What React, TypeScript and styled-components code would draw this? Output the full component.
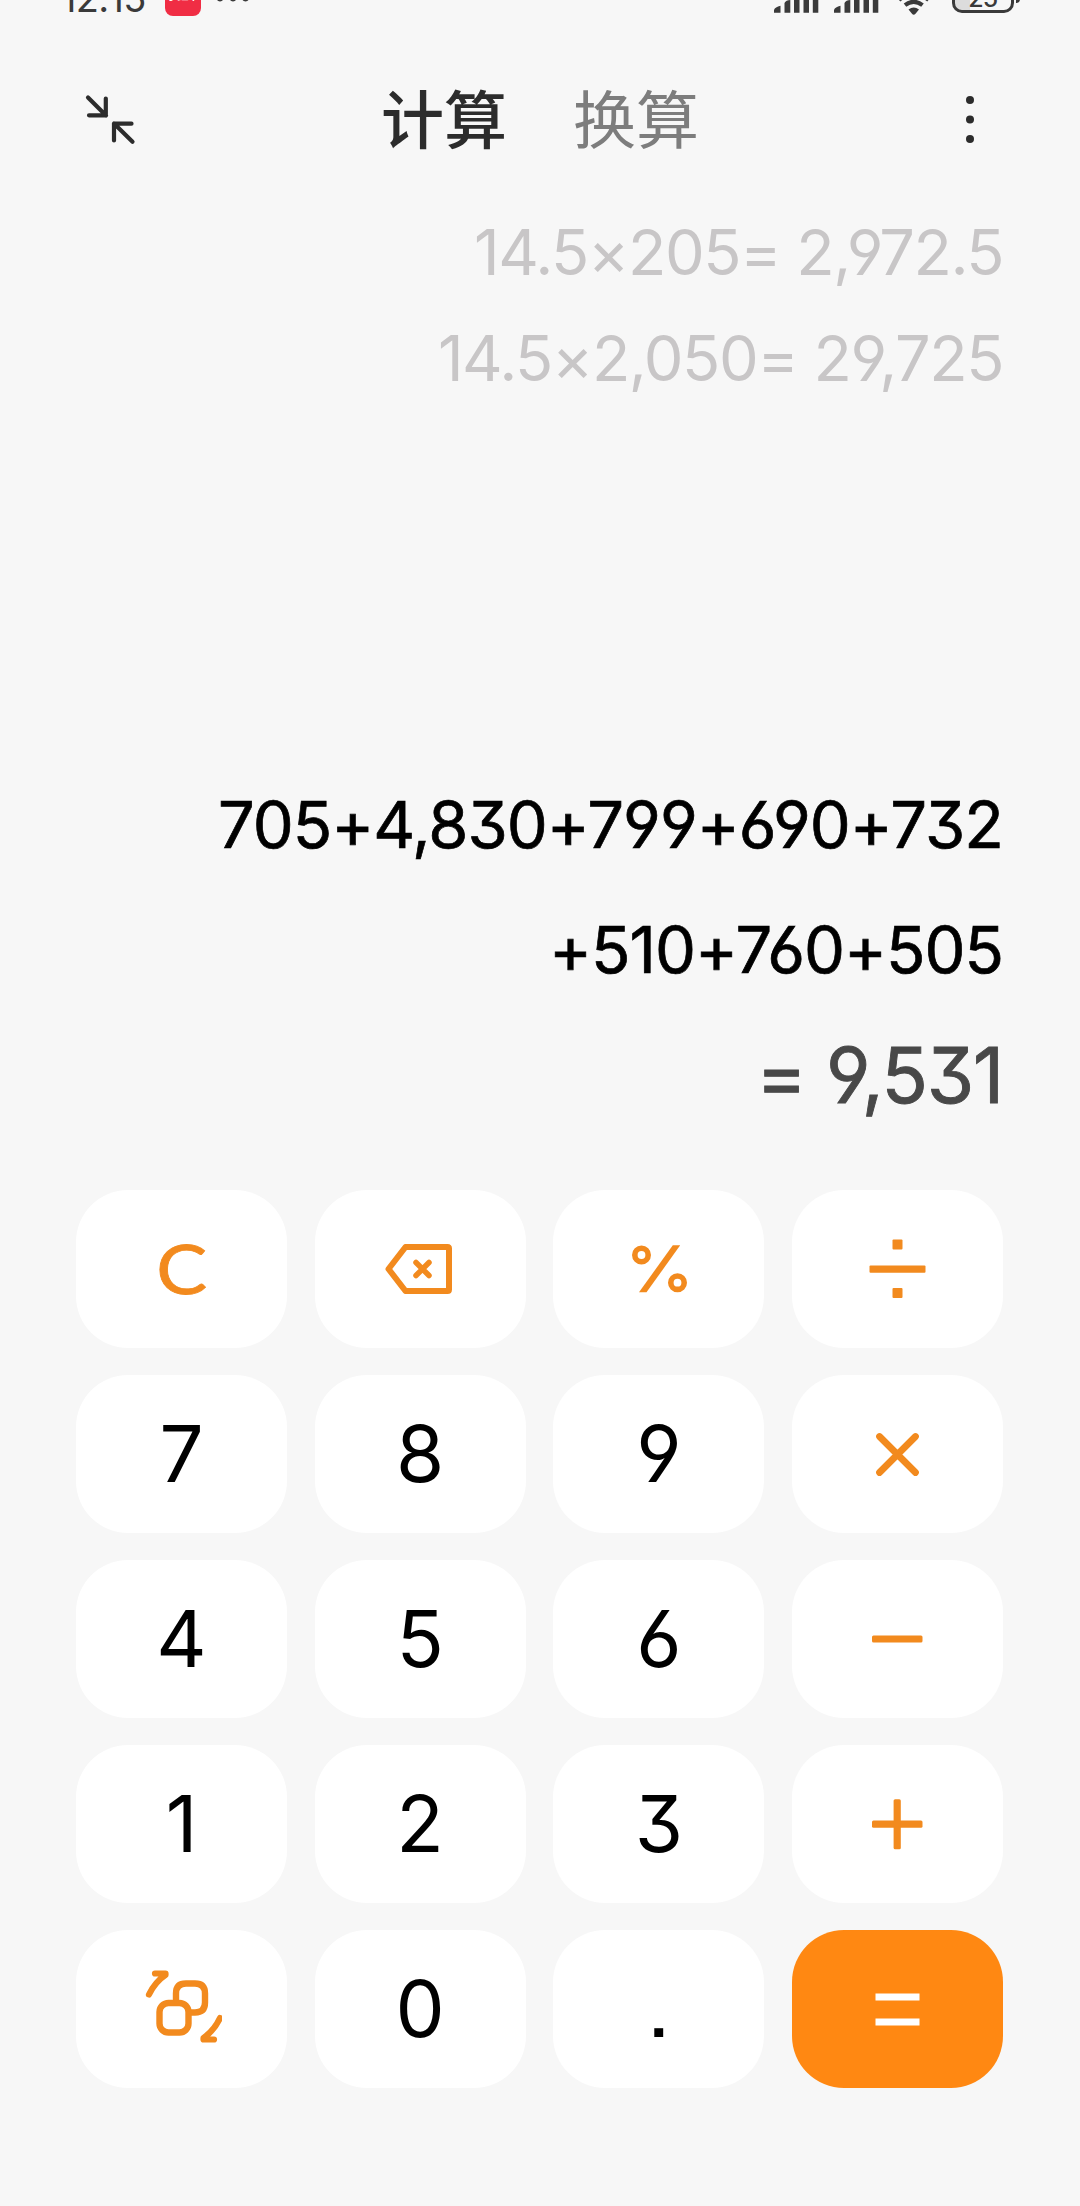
import React from "react";
import styled, { createGlobalStyle } from "styled-components";

const INK = "#2c2c2c";
const ACCENT = "#f28a1e";

const GlobalStyle = createGlobalStyle`
  * { box-sizing: border-box; }
  body { margin: 0; background: #f7f7f7; }
  button { border: 0; margin: 0; padding: 0; background: none; font: inherit; color: inherit; }
  svg { display: block; }
`;

const Screen = styled.main`
  display: flex;
  flex-direction: column;
  width: 1080px;
  height: 2206px;
  overflow: hidden;
  background: #f7f7f7;
  font-family: Inter, "Noto Sans CJK SC", sans-serif;
  font-feature-settings: "cv03", "cv04", "cv09";
`;

const StatusBar = styled.header`
  display: flex;
  justify-content: space-between;
  align-items: flex-start;
  height: 40px;
  padding: 0 60px 0 61px;
  color: #3a3a3a;
`;

const StatusGroup = styled.div`
  display: flex;
  align-items: flex-start;
`;

const Clock = styled.span`
  width: 104px;
  margin-top: -25px;
  font-size: 38px;
  line-height: 46px;
  letter-spacing: -0.7px;
  white-space: nowrap;
`;

const AppBadge = styled.span`
  width: 36px;
  height: 36px;
  margin-top: -20px;
  border-radius: 8px;
  background: #f02d44;
  color: #fff;
  font-size: 11px;
  font-weight: 700;
  line-height: 33px;
  text-align: center;
  white-space: nowrap;
`;

const Header = styled.nav`
  display: flex;
  justify-content: space-between;
  align-items: center;
  height: 159px;
  padding: 0 80px;
`;

const IconButton = styled.button`
  display: flex;
  width: 60px;
  justify-content: center;
`;

const Tabs = styled.div`
  display: flex;
  gap: 66px;
`;

const Tab = styled.button<{ $active?: boolean }>`
  font-size: 63px;
  line-height: 90px;
  padding-bottom: 8px;
  font-family: "Noto Sans CJK SC", sans-serif;
  font-weight: ${(p) => (p.$active ? 500 : 400)};
  color: ${(p) => (p.$active ? INK : "#7d7d7d")};
`;

const Display = styled.section`
  display: flex;
  flex-direction: column;
  justify-content: space-between;
  height: 939px;
  padding-right: 77px;
  text-align: right;
  white-space: nowrap;
`;

const HistoryLine = styled.div`
  font-size: 63px;
  line-height: 106px;
  letter-spacing: -1.5px;
  color: #c8c6c7;
`;

const ExpressionLine = styled.div`
  font-size: 65px;
  line-height: 125px;
  letter-spacing: -1px;
  -webkit-text-stroke: 0.7px currentColor;
  color: #000;
`;

const Result = styled.div`
  font-size: 76.5px;
  line-height: 126px;
  letter-spacing: -1.2px;
  -webkit-text-stroke: 0.9px currentColor;
  color: #484848;
`;

const Keypad = styled.section`
  display: grid;
  grid-template-columns: repeat(4, 211px);
  grid-auto-rows: 158px;
  justify-content: space-between;
  row-gap: 27px;
  margin: 52px 77px 0 76px;
`;

const Key = styled.button<{ $tone?: "accent" | "solid" }>`
  display: flex;
  align-items: center;
  justify-content: center;
  border-radius: 52px;
  background: ${(p) => (p.$tone === "solid" ? "#ff8812" : "#fff")};
  color: ${(p) => (p.$tone === "solid" ? "#fff" : p.$tone === "accent" ? ACCENT : "#000")};
  font-size: 78px;
  line-height: 100px;
  font-feature-settings: "cv03", "cv04", "cv09", "ss07";
`;

const ClearLabel = styled.span`
  padding-bottom: 3px;
  font-family: Lato, sans-serif;
  font-size: 68px;
  font-weight: 400;
  -webkit-text-stroke: 0.8px currentColor;
  transform: scaleX(1.12);
`;

const Glyph = ({ children }: { children: React.ReactNode }) => (
  <svg width="80" height="80" viewBox="-40 -40 80 80" fill="none" stroke="currentColor" strokeLinecap="round" strokeLinejoin="round">
    {children}
  </svg>
);

const Backspace = () => (
  <Glyph>
    <path d="M-31.5 0 -14.5 -22H27.5Q29 -22 29 -20.5V20.5Q29 22 27.5 22H-14.5Z" strokeWidth="6" />
    <path d="M-4 -6.5 9 6.5M9 -6.5 -4 6.5" strokeWidth="5.5" />
  </Glyph>
);

const Percent = () => (
  <Glyph>
    <circle cx="-17.5" cy="-14" r="6.7" strokeWidth="5.6" />
    <circle cx="18.5" cy="13.7" r="6.7" strokeWidth="5.6" />
    <path d="M-20 23.3H-12.5L21.2 -23.7H13.8Z" fill="currentColor" stroke="none" />
  </Glyph>
);

const Divide = () => (
  <Glyph>
    <g fill="currentColor" stroke="none">
      <rect x="-27.5" y="-3.6" width="56" height="7.3" rx="1" />
      <rect x="-4.5" y="-29.5" width="10" height="10" rx="1" />
      <rect x="-4.5" y="19" width="10" height="10" rx="1" />
    </g>
  </Glyph>
);

const Multiply = () => (
  <Glyph>
    <path d="M-17.5 -17.5 18.5 18.5M18.5 -17.5 -17.5 18.5" strokeWidth="6.8" />
  </Glyph>
);

const Minus = () => (
  <Glyph>
    <rect x="-25" y="-3.6" width="50.5" height="7.2" rx="1.5" fill="currentColor" stroke="none" />
  </Glyph>
);

const Plus = () => (
  <Glyph>
    <g fill="currentColor" stroke="none">
      <rect x="-25" y="-3.4" width="50.5" height="7.2" rx="1.5" />
      <rect x="-3.4" y="-24.7" width="7.2" height="50" rx="1.5" />
    </g>
  </Glyph>
);

const Equals = () => (
  <Glyph>
    <g fill="currentColor" stroke="none">
      <rect x="-21.5" y="-15.5" width="44" height="7" />
      <rect x="-21.5" y="9.5" width="44" height="7" />
    </g>
  </Glyph>
);

const Convert = () => (
  <Glyph>
    <path d="M-6 -10V-15.5Q-6 -25.5 4 -25.5H13Q23 -25.5 23 -15.5V-6.5Q23 3.5 13 3.5H9" strokeWidth="6.4" />
    <rect x="-22.5" y="-6" width="29" height="29.5" rx="9" strokeWidth="6.4" />
    <path d="M-27 -35.5H-16.5V-34Q-27 -27 -33 -14.5" strokeWidth="6.2" />
    <path d="M38 9Q32.5 21 21.5 29V30.5H32" strokeWidth="6.2" />
  </Glyph>
);

const Collapse = () => (
  <svg width="52" height="52" viewBox="84 93.5 52 52" fill="none" stroke={INK} strokeWidth="4.2" strokeLinecap="round" strokeLinejoin="round">
    <path d="M88 97 106 115M105.8 98V114.8H89" />
    <path d="M132.5 141.2 114 123M114 140V123.2H131.5" />
  </svg>
);

const More = () => (
  <svg width="12" height="52" viewBox="-6 -25.5 12 52" fill={INK}>
    <circle cy="-19.5" r="4" />
    <circle r="4" />
    <circle cy="19.5" r="4" />
  </svg>
);

const StatusDots = () => (
  <svg width="60" height="16" viewBox="201 0 60 16" fill="#3a3a3a">
    <circle cx="220" cy="-2" r="3.4" />
    <circle cx="233" cy="-2" r="3.4" />
    <circle cx="245.5" cy="-2" r="3.4" />
  </svg>
);

const Signal = () => (
  <svg width="60" height="16" viewBox="0 0 60 16" fill="#3a3a3a">
    <path d="M0 12.7V10Q1 7 6.5 5.8V12.7ZM10.5 12.7V3Q12 0 16.3 0V12.7ZM20 0H25.5V12.7H20ZM29.5 0H35V12.7H29.5ZM38.8 0H44.3V12.7H38.8Z" />
  </svg>
);

const Wifi = () => (
  <svg width="58" height="16" viewBox="893 0 58 16" fill="none" stroke="#3a3a3a">
    <path d="M904 5.2Q912.7 -1.5 921.5 5.2" strokeWidth="4.2" />
    <path d="M898 0Q912.7 -12 927.5 0" strokeWidth="4" />
    <path d="M907.5 9.5Q912.7 5.5 918 9.5L914.5 13.8Q912.7 15.5 911 13.8Z" fill="#3a3a3a" stroke="none" />
  </svg>
);

const Battery = styled.span`
  width: 62.5px;
  height: 33px;
  margin-top: -20px;
  border: 3px solid #3a3a3a;
  border-radius: 10px;
  background: linear-gradient(90deg, #dcdcdc 15px, transparent 15px);
  font-size: 25px;
  font-weight: 500;
  line-height: 30px;
  text-align: center;
  letter-spacing: -1px;
`;

const BatteryTip = styled.span`
  width: 4px;
  height: 8px;
  margin: -5px 0 0 2px;
  border-radius: 0 4px 4px 0;
  background: #3a3a3a;
`;

type KeySpec = { id: string; label: React.ReactNode; tone?: "accent" | "solid" };

const keys: KeySpec[] = [
  { id: "clear", label: <ClearLabel>C</ClearLabel>, tone: "accent" },
  { id: "backspace", label: <Backspace />, tone: "accent" },
  { id: "percent", label: <Percent />, tone: "accent" },
  { id: "divide", label: <Divide />, tone: "accent" },
  { id: "7", label: "7" },
  { id: "8", label: "8" },
  { id: "9", label: "9" },
  { id: "multiply", label: <Multiply />, tone: "accent" },
  { id: "4", label: "4" },
  { id: "5", label: "5" },
  { id: "6", label: "6" },
  { id: "minus", label: <Minus />, tone: "accent" },
  { id: "1", label: "1" },
  { id: "2", label: "2" },
  { id: "3", label: "3" },
  { id: "plus", label: <Plus />, tone: "accent" },
  { id: "convert", label: <Convert />, tone: "accent" },
  { id: "0", label: "0" },
  { id: "point", label: "." },
  { id: "equals", label: <Equals />, tone: "solid" },
];

export default function App() {
  return (
    <Screen>
      <GlobalStyle />
      <StatusBar>
        <StatusGroup>
          <Clock>12:15</Clock>
          <AppBadge>小红书</AppBadge>
          <StatusDots />
        </StatusGroup>
        <StatusGroup>
          <Signal />
          <Signal />
          <Wifi />
          <Battery>25</Battery>
          <BatteryTip />
        </StatusGroup>
      </StatusBar>
      <Header>
        <IconButton><Collapse /></IconButton>
        <Tabs>
          <Tab $active>计算</Tab>
          <Tab>换算</Tab>
        </Tabs>
        <IconButton><More /></IconButton>
      </Header>
      <Display>
        <div>
          <HistoryLine>14.5×205= 2,972.5</HistoryLine>
          <HistoryLine>14.5×2,050= 29,725</HistoryLine>
        </div>
        <div>
          <ExpressionLine>705+4,830+799+690+732</ExpressionLine>
          <ExpressionLine>+510+760+505</ExpressionLine>
          <Result>= 9,531</Result>
        </div>
      </Display>
      <Keypad>
        {keys.map((k) => (
          <Key key={k.id} $tone={k.tone}>{k.label}</Key>
        ))}
      </Keypad>
    </Screen>
  );
}
